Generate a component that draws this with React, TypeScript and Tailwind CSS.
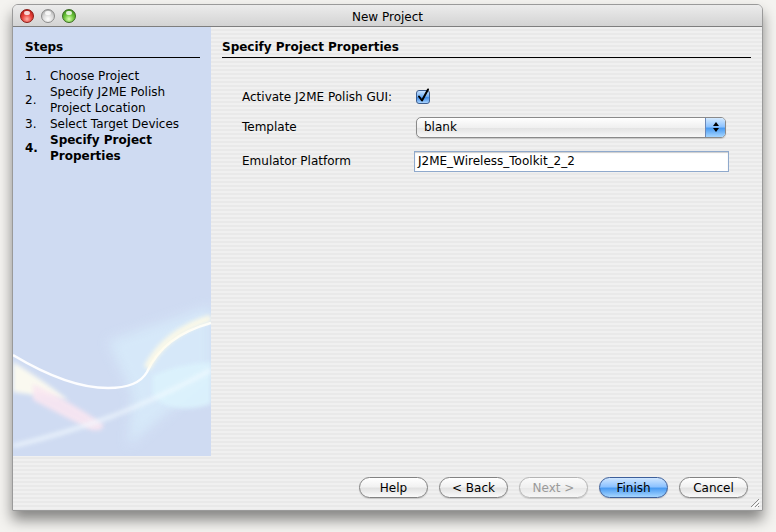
import React from "react";

const font = { fontFamily: '"DejaVu Sans", "Liberation Sans", sans-serif' };

const stripes =
  "bg-[repeating-linear-gradient(to_bottom,#f0f0f0_0px,#f0f0f0_2px,#e9e9e9_2px,#e9e9e9_4px)]";

const Light = ({ color }: { color: "red" | "gray" | "green" }) => {
  const cls =
    color === "red"
      ? "bg-[radial-gradient(circle_at_50%_75%,#ffb0a8_0%,#e8423a_45%,#a8140f_100%)] border-[#8a1a14]"
      : color === "green"
      ? "bg-[radial-gradient(circle_at_50%_75%,#d8ffb0_0%,#6cc43a_45%,#2e7a12_100%)] border-[#3a6a20]"
      : "bg-[radial-gradient(circle_at_50%_75%,#ffffff_0%,#d8d8d8_50%,#9a9a9a_100%)] border-[#8c8c8c]";
  return (
    <div className={`relative w-[14px] h-[14px] rounded-full border ${cls}`}>
      <div className="absolute left-[3px] top-[1px] w-[6px] h-[4px] rounded-full bg-white/80" />
    </div>
  );
};

const Button = ({
  label,
  kind = "normal",
}: {
  label: string;
  kind?: "normal" | "default" | "disabled";
}) => {
  const look =
    kind === "default"
      ? "border-[#3d5f9a] bg-[linear-gradient(to_bottom,#cfe6ff_0%,#8ec3ff_45%,#4c9cf2_55%,#a6d6ff_100%)] text-black"
      : kind === "disabled"
      ? "border-[#b4b4b4] bg-[linear-gradient(to_bottom,#fbfbfb_0%,#f0f0f0_50%,#e8e8e8_55%,#f6f6f6_100%)] text-[#9a9a9a]"
      : "border-[#828282] bg-[linear-gradient(to_bottom,#ffffff_0%,#f2f2f2_45%,#e2e2e2_55%,#fafafa_100%)] text-black";
  return (
    <div
      className={`w-[69px] h-[21px] rounded-full border flex items-center justify-center text-[12px] shadow-[0_1px_1px_rgba(0,0,0,0.15)] ${look}`}
    >
      {label}
    </div>
  );
};

// decorative wallpaper at the bottom of the steps panel
const Swoosh = () => (
  <svg
    className="absolute left-0 bottom-0"
    width="198"
    height="160"
    viewBox="0 0 198 160"
  >
    <defs>
      <filter id="swBlur2" x="-20%" y="-20%" width="140%" height="140%">
        <feGaussianBlur stdDeviation="2" />
      </filter>
      <filter id="swBlur6" x="-20%" y="-20%" width="140%" height="140%">
        <feGaussianBlur stdDeviation="6" />
      </filter>
    </defs>
    {/* pale cyan haze */}
    <path
      d="M95 45 L198 10 L198 80 L150 120 L115 150 L120 100 Z"
      fill="#d8ecfb"
      opacity="0.8"
      filter="url(#swBlur6)"
    />
    <path
      d="M140 80 Q165 68 198 66 L198 108 Q160 120 140 100 Z"
      fill="#dcf3fd"
      opacity="0.9"
      filter="url(#swBlur2)"
    />
    {/* pale cream / pink diagonal band */}
    <path
      d="M0 66 Q30 84 55 104 Q30 100 0 96 Z"
      fill="#fffdf0"
      opacity="0.9"
      filter="url(#swBlur2)"
    />
    <path
      d="M20 88 Q55 104 90 128 Q92 136 78 134 Q50 120 20 104 Z"
      fill="#f9e6f1"
      opacity="0.9"
      filter="url(#swBlur2)"
    />
    {/* lower swoosh */}
    <path
      d="M0 150 Q50 138 100 120 Q150 100 198 74"
      stroke="#f4fbff"
      strokeWidth="4"
      fill="none"
      opacity="0.7"
      filter="url(#swBlur2)"
    />
    {/* main white arc */}
    <path
      d="M0 59 Q55 92 95 92 Q125 92 134 76 Q150 40 198 27"
      stroke="#ffffff"
      strokeWidth="2.5"
      fill="none"
      opacity="0.95"
    />
    <path
      d="M134 72 Q152 36 198 22"
      stroke="#fffbe6"
      strokeWidth="7"
      fill="none"
      opacity="0.9"
      filter="url(#swBlur2)"
    />
  </svg>
);

export default function App() {
  return (
    <div
      className="w-[776px] h-[532px] bg-[#f4f3f0] pl-[12px] pt-[4px]"
      style={font}
    >
      <div className="w-[751px] h-[507px] flex flex-col rounded-t-[6px] border border-[#9a9a9a] shadow-[0_9px_14px_rgba(0,0,0,0.45)] overflow-hidden">
        {/* title bar */}
        <div className="relative h-[22px] shrink-0 flex items-center bg-[linear-gradient(to_bottom,#ececec,#d3d3d3)] border-b border-[#7e7e7e]">
          <div className="flex items-center gap-[7px] pl-[7px]">
            <Light color="red" />
            <Light color="gray" />
            <Light color="green" />
          </div>
          <div className="absolute inset-0 flex items-center justify-center pt-[2px] text-[12px] text-black">
            New Project
          </div>
        </div>

        {/* body */}
        <div className={`flex-1 flex flex-col ${stripes}`}>
          <div className="flex h-[429px]">
            {/* steps */}
            <div className="relative w-[198px] shrink-0 bg-[#cfdbf2] overflow-hidden">
              <Swoosh />
              <div className="relative pl-[12px] pr-[10px] pt-[12px]">
                <div className="text-[12px] font-bold leading-[16px] text-black border-b border-black pb-[2px] w-[175px]">
                  Steps
                </div>
                <div className="mt-[10px] text-[12px] leading-[16px] text-black">
                  <div className="flex items-center">
                    <span className="w-[25px]">1.</span>
                    <span>Choose Project</span>
                  </div>
                  <div className="flex items-center">
                    <span className="w-[25px]">2.</span>
                    <span>
                      Specify J2ME Polish
                      <br />
                      Project Location
                    </span>
                  </div>
                  <div className="flex items-center">
                    <span className="w-[25px]">3.</span>
                    <span>Select Target Devices</span>
                  </div>
                  <div className="flex items-center font-bold">
                    <span className="w-[25px]">4.</span>
                    <span>
                      Specify Project
                      <br />
                      Properties
                    </span>
                  </div>
                </div>
              </div>
            </div>

            {/* properties */}
            <div className="flex-1 pl-[11px] pr-[11px] pt-[12px]">
              <div className="text-[12px] font-bold leading-[16px] text-black border-b border-black pb-[2px]">
                Specify Project Properties
              </div>
              <div className="mt-[24px] pl-[20px] text-[12px] text-black">
                <div className="flex items-center h-[30px]">
                  <span className="w-[174px]">Activate J2ME Polish GUI:</span>
                  <div className="w-[14px] h-[14px] rounded-[3px] border border-[#3e5e8f] bg-[linear-gradient(to_bottom,#c8e2ff,#6aaaf0_50%,#3f8ae6_55%,#a8d4ff)] flex items-center justify-center">
                    <svg width="14" height="14" viewBox="0 0 14 14" className="overflow-visible">
                      <path
                        d="M3 6.5 L6 10.5 L12 -0.5"
                        stroke="#000"
                        strokeWidth="2"
                        fill="none"
                        strokeLinecap="round"
                        strokeLinejoin="round"
                      />
                    </svg>
                  </div>
                </div>
                <div className="flex items-center h-[30px]">
                  <span className="w-[174px]">Template</span>
                  <div className="w-[310px] h-[21px] rounded-[5px] border border-[#8a8a8a] bg-[linear-gradient(to_bottom,#ffffff,#f0f0f0_50%,#e4e4e4_55%,#f8f8f8)] flex items-center shadow-[0_1px_1px_rgba(0,0,0,0.15)]">
                    <span className="flex-1 pl-[7px]">blank</span>
                    <div className="w-[20px] h-full rounded-r-[4px] border-l border-[#6b88b8] bg-[linear-gradient(to_bottom,#d4eaff,#8ec3ff_45%,#4c9cf2_55%,#a6d6ff)] flex flex-col items-center justify-center gap-[2px]">
                      <div className="w-0 h-0 border-l-[3px] border-r-[3px] border-b-[4px] border-l-transparent border-r-transparent border-b-black" />
                      <div className="w-0 h-0 border-l-[3px] border-r-[3px] border-t-[4px] border-l-transparent border-r-transparent border-t-black" />
                    </div>
                  </div>
                </div>
                <div className="flex items-center h-[34px] mt-[2px]">
                  <span className="w-[172px]">Emulator Platform</span>
                  <div className="w-[315px] h-[21px] border border-[#8fa9cc] bg-white shadow-[inset_0_1px_1px_rgba(0,0,0,0.2)] flex items-center pl-[3px]">
                    J2ME_Wireless_Toolkit_2_2
                  </div>
                </div>
              </div>
            </div>
          </div>

          {/* buttons */}
          <div className="relative flex-1 flex items-start justify-end gap-[11px] pt-[21px] pr-[14px]">
            <Button label="Help" />
            <Button label="< Back" />
            <Button label="Next >" kind="disabled" />
            <Button label="Finish" kind="default" />
            <Button label="Cancel" />
            <svg
              className="absolute right-[2px] bottom-[2px]"
              width="12"
              height="12"
              viewBox="0 0 12 12"
            >
              <path d="M11 3 L3 11 M11 7 L7 11 M11 10 L10 11" stroke="#8a8a8a" strokeWidth="1" />
              <path d="M12 4 L4 12 M12 8 L8 12" stroke="#ffffff" strokeWidth="1" />
            </svg>
          </div>
        </div>
      </div>
    </div>
  );
}
